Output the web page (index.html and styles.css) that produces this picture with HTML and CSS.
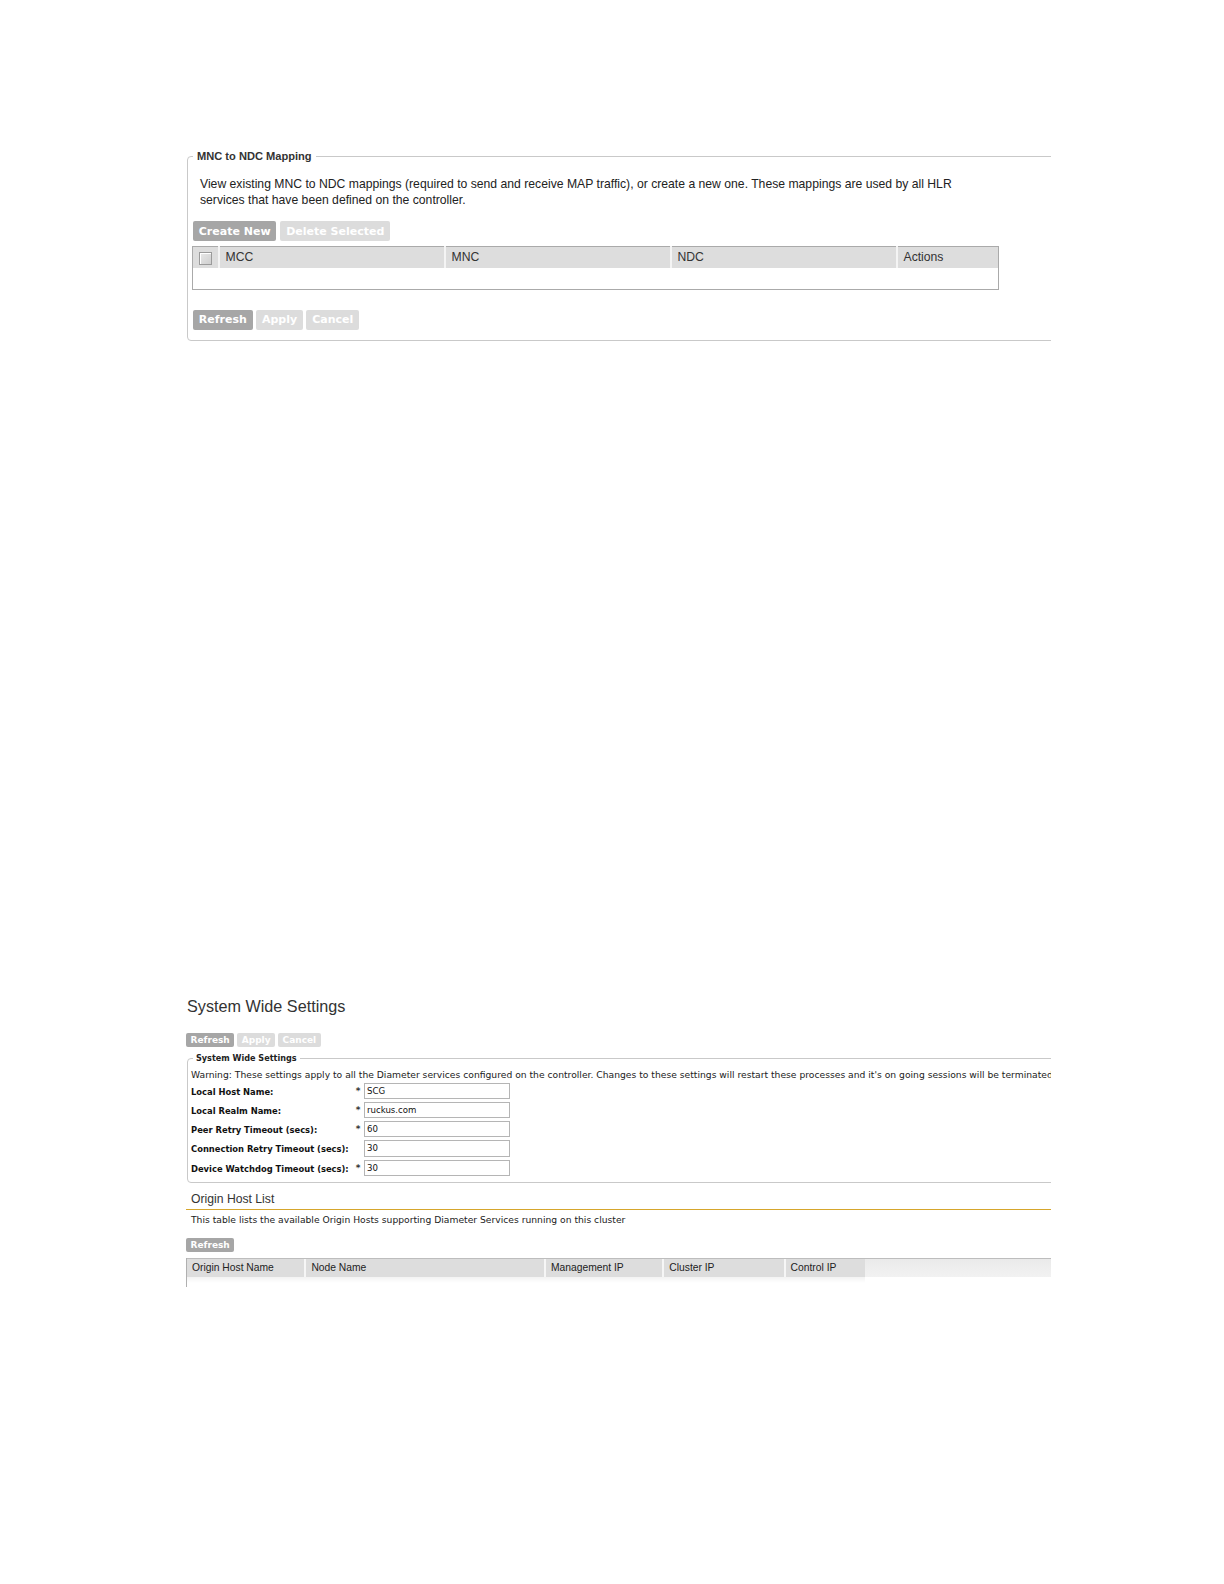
FILE: index.html
```html
<!DOCTYPE html>
<html>
<head>
<meta charset="utf-8">
<title>MNC to NDC Mapping / System Wide Settings</title>
<link rel="stylesheet" href="styles.css">
</head>
<body>
<div class="page">
  <fieldset class="box box-mnc">
    <legend class="box-title">MNC to NDC Mapping</legend>
    <p class="intro">View existing MNC to NDC mappings (required to send and receive MAP traffic), or create a new one. These mappings are used by all HLR services that have been defined on the controller.</p>
    <div class="btn-row">
      <button class="btn btn-lg btn-on">Create New</button>
      <button class="btn btn-lg btn-off">Delete Selected</button>
    </div>
    <table class="grid">
      <thead>
        <tr>
          <th class="col-check"><span class="checkbox"></span></th>
          <th class="col-mcc">MCC</th>
          <th class="col-mnc">MNC</th>
          <th class="col-ndc">NDC</th>
          <th class="col-actions">Actions</th>
        </tr>
      </thead>
      <tbody>
        <tr class="empty-row"><td colspan="5"></td></tr>
      </tbody>
    </table>
    <div class="btn-row btn-row-bottom">
      <button class="btn btn-lg btn-on">Refresh</button>
      <button class="btn btn-lg btn-off">Apply</button>
      <button class="btn btn-lg btn-off">Cancel</button>
    </div>
  </fieldset>

  <section class="sws">
    <h2 class="sws-title">System Wide Settings</h2>
    <div class="btn-row-sm">
      <button class="btn btn-sm btn-on">Refresh</button>
      <button class="btn btn-sm btn-off">Apply</button>
      <button class="btn btn-sm btn-off">Cancel</button>
    </div>
    <fieldset class="box box-sws">
      <legend class="box-title-sm">System Wide Settings</legend>
      <p class="warn">Warning: These settings apply to all the Diameter services configured on the controller. Changes to these settings will restart these processes and it's on going sessions will be terminated.</p>
      <div class="form">
        <label class="f-label">Local Host Name:</label><span class="f-req">*</span><input class="f-input" value="SCG">
        <label class="f-label">Local Realm Name:</label><span class="f-req">*</span><input class="f-input" value="ruckus.com">
        <label class="f-label">Peer Retry Timeout (secs):</label><span class="f-req">*</span><input class="f-input" value="60">
        <label class="f-label">Connection Retry Timeout (secs):</label><span class="f-req"></span><input class="f-input" value="30">
        <label class="f-label">Device Watchdog Timeout (secs):</label><span class="f-req">*</span><input class="f-input" value="30">
      </div>
    </fieldset>

    <h3 class="ohl-title">Origin Host List</h3>
    <p class="ohl-desc">This table lists the available Origin Hosts supporting Diameter Services running on this cluster</p>
    <div class="btn-row-sm btn-row-ohl">
      <button class="btn btn-sm btn-on">Refresh</button>
    </div>
    <div class="ohl-table">
      <div class="ohl-head">
        <div class="oh-col oh-c1">Origin Host Name</div>
        <div class="oh-col oh-c2">Node Name</div>
        <div class="oh-col oh-c3">Management IP</div>
        <div class="oh-col oh-c4">Cluster IP</div>
        <div class="oh-col oh-c5">Control IP</div>
        <div class="oh-col oh-rest"></div>
      </div>
      <div class="ohl-body"></div>
    </div>
  </section>
</div>
</body>
</html>
```

FILE: styles.css
```css
html, body {
  margin: 0;
  padding: 0;
  background: #ffffff;
}

.page {
  width: 865px;
  padding: 150px 0 0 186px;
  overflow: hidden;
  font-family: "Liberation Sans", Arial, sans-serif;
  color: #222222;
}

/* ---------- generic fieldset box ---------- */
.box {
  border: 1px solid #c9c9c9;
  border-radius: 4px;
  width: 1000px;
  min-width: 0;
  box-sizing: border-box;
  margin: 0 0 0 1px;
}

.box-mnc {
  padding: 0 0 10px 4px;
}

.box-title {
  font: bold 11.1px/13px "Liberation Sans", Arial, sans-serif;
  color: #333333;
  padding: 0 4px;
  margin-left: 1px;
}

.intro {
  margin: 13px 0 0 8px;
  width: 780px;
  font-size: 12.2px;
  line-height: 16.2px;
  color: #222222;
}

/* ---------- buttons ---------- */
.btn-row {
  display: flex;
  gap: 4px;
  margin: 13px 0 0 1px;
}

.btn-row-bottom {
  margin-top: 20px;
  gap: 3.5px;
}

.btn {
  border: 0;
  border-radius: 2px;
  color: #ffffff;
  margin: 0;
  cursor: default;
}

.btn-lg {
  height: 19.3px;
  padding: 0 5.8px;
  font: bold 11px/19px "DejaVu Sans", Verdana, sans-serif;
}

.btn-sm {
  height: 14.2px;
  padding: 0 4.5px;
  font: bold 9px/14px "DejaVu Sans", Verdana, sans-serif;
}

.btn-on {
  background: #a6a6a6;
}

.btn-off {
  background: #dcdcdc;
}

/* ---------- table 1 ---------- */
.grid {
  margin-top: 5px;
  width: 807px;
  border-collapse: collapse;
  border: 1px solid #aaaaaa;
  table-layout: fixed;
}

.grid th {
  background: #dddddd;
  height: 22px;
  padding: 0 0 0 6px;
  text-align: left;
  font: normal 12.2px "Liberation Sans", Arial, sans-serif;
  color: #333333;
  border-left: 2px solid #f4f4f4;
  box-sizing: border-box;
}

.grid th:first-child {
  border-left: 0;
}

.grid .col-check {
  width: 26px;
  padding: 0;
  text-align: center;
}

.grid .col-mcc { width: 226px; }
.grid .col-mnc { width: 226px; }
.grid .col-ndc { width: 226px; }

.checkbox {
  display: inline-block;
  width: 11px;
  height: 11px;
  border: 1px solid #9a9a9a;
  background: linear-gradient(135deg, #e8e8e8, #cfcfcf);
  vertical-align: middle;
  box-shadow: inset 1px 1px 0 #ffffff;
}

.empty-row td {
  height: 19px;
  background: #ffffff;
}

/* ---------- system wide settings ---------- */
.sws-title {
  margin: 655px 0 0 1px;
  font: normal 16.2px/20px "Liberation Sans", Arial, sans-serif;
  color: #333333;
}

.btn-row-sm {
  display: flex;
  gap: 3px;
  margin-top: 17px;
}

.box-sws {
  margin-top: 6px;
  padding: 0 0 4.5px 3px;
}

.box-title-sm {
  font: bold 9px/11px "DejaVu Sans Condensed", "DejaVu Sans", Tahoma, sans-serif;
  color: #222222;
  padding: 0 3px;
  margin-left: 2px;
}

.warn {
  margin: 5px 0 0 0;
  white-space: nowrap;
  font: normal 9.2px/12px "DejaVu Sans", Verdana, sans-serif;
  color: #222222;
}

.form {
  display: grid;
  grid-template-columns: 161px 12px 146px;
  grid-auto-rows: 19.2px;
  align-items: center;
  margin-top: 0.6px;
}

.f-label {
  font: bold 9.3px/12px "DejaVu Sans Condensed", "DejaVu Sans", Tahoma, sans-serif;
  color: #111111;
  padding-top: 2px;
}

.f-req {
  font: bold 9px/12px "DejaVu Sans", sans-serif;
  text-align: center;
  color: #333333;
}

.f-input {
  height: 16.2px;
  box-sizing: border-box;
  border: 1px solid #b5b5b5;
  padding: 0 2px;
  margin: 0;
  font: normal 8.6px "DejaVu Sans", Verdana, sans-serif;
  color: #111111;
  background: #ffffff;
}

/* ---------- origin host list ---------- */
.ohl-title {
  margin: 8.6px 0 0 0;
  padding: 0 0 2px 5px;
  font: normal 12.2px/16px "Liberation Sans", Arial, sans-serif;
  color: #333333;
  border-bottom: 1px solid #d6a62c;
}

.ohl-desc {
  margin: 3.4px 0 0 5px;
  white-space: nowrap;
  font: normal 9.2px/12px "DejaVu Sans", Verdana, sans-serif;
  color: #222222;
}

.btn-row-ohl {
  margin-top: 12.2px;
}

.ohl-table {
  margin-top: 6.2px;
  border-left: 1px solid #b0b0b0;
}

.ohl-head {
  display: flex;
  height: 18px;
  border-top: 1px solid #bdbdbd;
  background: #dddddd;
}

.oh-col {
  box-sizing: border-box;
  padding-left: 5px;
  font: normal 10.3px/17px "Liberation Sans", Arial, sans-serif;
  color: #222222;
  border-right: 2px solid #f6f6f6;
}

.oh-c1 { width: 119.4px; }
.oh-c2 { width: 239.6px; }
.oh-c3 { width: 118.3px; }
.oh-c4 { width: 121.3px; }
.oh-c5 { width: 79px; border-right: 0; }

.oh-rest {
  flex: 1;
  border-right: 0;
  background: linear-gradient(to bottom, #eaeaea, #f2f2f2);
}

.ohl-body {
  height: 10px;
  background: linear-gradient(to bottom, #f3f3f3, #ffffff 60%);
  background-size: 678px 100%;
  background-repeat: no-repeat;
}
```
